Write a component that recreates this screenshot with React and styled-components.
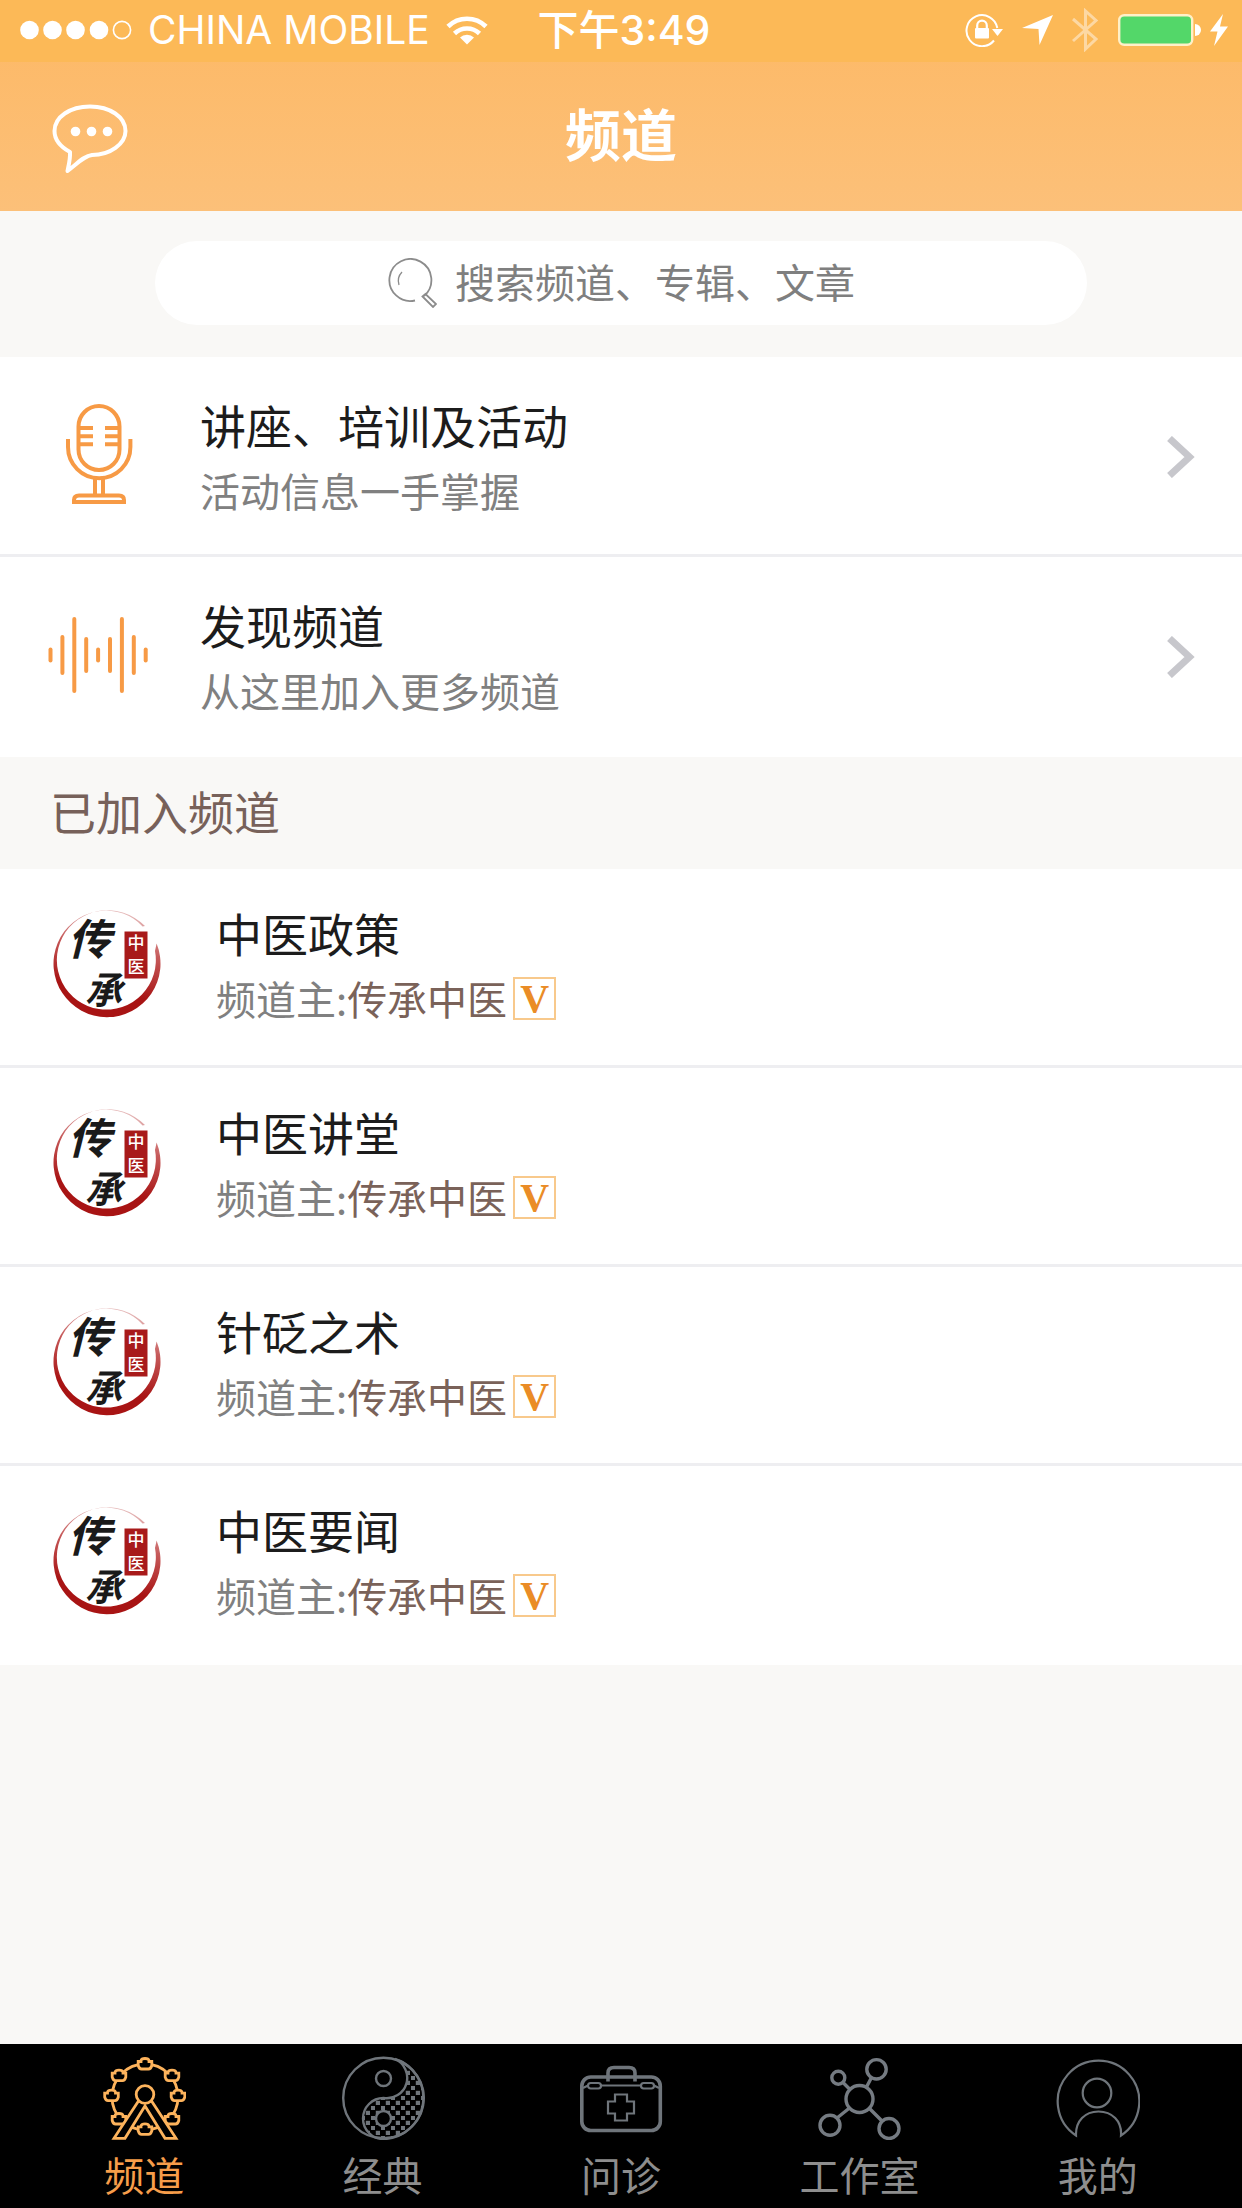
import React from "react";
import styled, { createGlobalStyle } from "styled-components";

const GlobalStyle = createGlobalStyle`
  * {
    box-sizing: border-box;
  }
  body {
    margin: 0;
    background-color: #f9f8f6;
    font-family: "Noto Sans CJK SC", sans-serif;
    font-weight: 400;
  }
`;

const Page = styled.div`
  display: flex;
  flex-direction: column;
  min-height: 100vh;
`;

const Header = styled.header`
  background: linear-gradient(#fdb864, #fcc079);
  color: white;
`;

const StatusBar = styled.div`
  display: flex;
  justify-content: space-between;
  align-items: center;
  height: 62px;
  padding: 0 14px 2px 20px;
  background-color: #fcb957;
  font-family: Inter, "Noto Sans CJK SC", sans-serif;
  font-size: 39px;
  line-height: 60px;
`;

const StatusGroup = styled.div`
  display: flex;
  flex: 1;
  align-items: center;
  justify-content: ${(props) => (props.$end ? "flex-end" : "flex-start")};
  gap: ${(props) => (props.$end ? "19px" : "16px")};
  white-space: nowrap;
`;

const Time = styled.time`
  font-size: 41px;
  font-weight: 500;
`;

const NavBar = styled.div`
  display: grid;
  grid-template-columns: 1fr auto 1fr;
  align-items: center;
  height: 149px;
  padding: 2px 50px 0;
`;

const IconButton = styled.button`
  display: flex;
  justify-self: start;
  padding: 0;
  border: none;
  background: none;
  color: inherit;
  cursor: pointer;
`;

const Title = styled.h1`
  margin: 0;
  padding-bottom: 12px;
  font-size: 56px;
  line-height: 72px;
  font-weight: 700;
`;

const SearchArea = styled.div`
  padding: 30px 12.5% 32px;
`;

const SearchBox = styled.label`
  display: flex;
  align-items: center;
  justify-content: center;
  gap: 18px;
  height: 84px;
  border-radius: 42px;
  background-color: white;
`;

const SearchInput = styled.input`
  width: 400px;
  padding: 0 0 4px;
  border: none;
  outline: none;
  background: none;
  color: #7a7a7a;
  font-family: inherit;
  font-size: 40px;
  line-height: 60px;
  &::placeholder {
    color: #7f7f7f;
    opacity: 1;
  }
`;

const Main = styled.main`
  flex: 1;
`;

const List = styled.ul`
  margin: 0;
  padding: 0;
  list-style: none;
  background-color: white;
`;

const Item = styled.li`
  border-bottom: 3px solid #eeeef1;
  &:last-child {
    border-bottom-color: white;
  }
`;

const RowLink = styled.a`
  display: flex;
  align-items: center;
  gap: 52px;
  height: ${(props) => (props.$channel ? "196px" : "197px")};
  padding: ${(props) => (props.$channel ? "0 47px 4px 50px" : "2px 47px 0 48px")};
  color: inherit;
  text-decoration: none;
`;

const RowText = styled.div`
  flex: 1;
`;

const RowTitle = styled.div`
  color: #1c1c1c;
  font-size: 46px;
  line-height: 66px;
`;

const RowSub = styled.div`
  display: flex;
  align-items: center;
  color: #808080;
  font-size: 40px;
  line-height: 66px;
`;

const Owner = styled.span`
  color: #7a6259;
`;

const Badge = styled.span`
  width: 43px;
  height: 43px;
  margin-left: 6px;
  border: 2px solid #f8c98c;
  color: #ea8c26;
  font-family: "Liberation Serif", serif;
  font-size: 40px;
  font-weight: 700;
  line-height: 39px;
  text-align: center;
`;

const SectionTitle = styled.h2`
  margin: 0;
  padding: 20px 50px 26px;
  color: #77615a;
  font-size: 46px;
  line-height: 66px;
  font-weight: 400;
`;

const TabBar = styled.nav`
  display: grid;
  grid-template-columns: repeat(5, 1fr);
  padding: 12px 25px 10px;
  background-color: black;
`;

const Tab = styled.a`
  display: flex;
  flex-direction: column;
  align-items: center;
  gap: 10px;
  color: ${(props) => (props.$active ? "#f79d4a" : "#8e8e8e")};
  font-size: 40px;
  line-height: 48px;
  text-decoration: none;
`;

const SignalIcon = () => (
  <svg width="112" height="20" viewBox="0 0 112 20" fill="white">
    {[9.5, 32.5, 55.5, 79].map((x) => (
      <circle key={x} cx={x} cy="10" r="9.3" />
    ))}
    <circle cx="102" cy="10" r="8.6" fill="none" stroke="white" strokeWidth="1.6" />
  </svg>
);

const WifiIcon = () => (
  <svg width="42" height="30" viewBox="0 0 42 30" fill="none" stroke="white" strokeWidth="4.6">
    <path d="M2 11.5 A27 27 0 0 1 40 11.5" />
    <path d="M8.5 18.5 A18 18 0 0 1 33.5 18.5" />
    <path d="M21 29.5 L14 22.5 A10 10 0 0 1 28 22.5 Z" fill="white" stroke="none" />
  </svg>
);

const LockIcon = () => (
  <svg width="38" height="34" viewBox="0 0 38 34">
    <path d="M29 27.5 A15.5 15.5 0 1 1 32.3 15" fill="none" stroke="white" strokeWidth="2" />
    <path d="M27 16 H38 L32.5 23 Z" fill="white" />
    <path d="M12.2 16 V12.5 A4.8 4.8 0 0 1 21.8 12.5 V16" fill="none" stroke="white" strokeWidth="2.2" />
    <rect x="10" y="15" width="14" height="10.5" rx="1" fill="white" />
  </svg>
);

const LocationIcon = () => (
  <svg width="31" height="30" viewBox="0 0 31 30" fill="white">
    <path d="M31 0 L17.5 30 L16.5 14 L0 13 Z" />
  </svg>
);

const BluetoothIcon = () => (
  <svg width="27" height="44" viewBox="0 0 27 44" fill="none" stroke="white" strokeWidth="3" opacity="0.45">
    <path d="M1 11 L24 31 L13.5 41 V3 L24 12.5 L1 33" />
  </svg>
);

const BatteryIcon = () => (
  <svg width="110" height="32" viewBox="0 0 110 32">
    <rect x="1.2" y="1.2" width="73" height="29.6" rx="5" fill="#53d769" stroke="#fff0c8" strokeWidth="2.4" />
    <path d="M77 10 A6 6 0 0 1 77 22 Z" fill="white" />
    <path d="M105 0 L92 17.5 H99.5 L96 32 L110 12.5 H102 Z" fill="white" />
  </svg>
);

const ChatIcon = () => (
  <svg width="80" height="72" viewBox="0 0 80 72" fill="none" stroke="white" strokeWidth="4" strokeLinejoin="round">
    <path d="M20 50 C9 44 4.5 37 4.5 29 C4.5 15 20 4.5 40 4.5 C60 4.5 75.5 15 75.5 29 C75.5 42 60 53 42 53 C34 54 28 61 17.5 69 C19 62 20.5 56 20 50 Z" />
    <g fill="white" stroke="none">
      <circle cx="25.5" cy="29.5" r="4.8" />
      <circle cx="41.5" cy="29.5" r="4.8" />
      <circle cx="57.5" cy="29.5" r="4.8" />
    </g>
  </svg>
);

const SearchIcon = () => (
  <svg width="50" height="50" viewBox="0 0 50 50" fill="none" stroke="#8c8c8c" strokeWidth="1.8">
    <path d="M28 42.5 A21 21 0 1 1 37 38" />
    <path d="M12 27 A13 13 0 0 1 15 14" strokeWidth="1.3" />
    <path d="M35.5 38.5 L38.5 36 L49 46 L46 49 Z" />
  </svg>
);

const MicIcon = () => (
  <svg width="100" height="106" viewBox="0 0 100 106" fill="none" stroke="#f79a45" strokeWidth="4">
    <rect x="30.5" y="2" width="41" height="64" rx="20.5" />
    <path d="M31 24 H45 M31 32.3 H45 M31 40.3 H45 M57 24 H71 M57 32.3 H71 M57 40.3 H71" />
    <path d="M20 35 V43 A31.2 31.2 0 0 0 82.4 43 V35" />
    <path d="M47 75 V91 M55 75 V91" />
    <path d="M26 98 V96 Q26 91.5 31 91.5 H71 Q76 91.5 76 96 V98 Z" />
  </svg>
);

// half height of each bar, left to right
const bars = [7.5, 20, 38, 18, 7.5, 18, 38, 20, 7.5];

const WaveIcon = () => (
  <svg width="100" height="104" viewBox="0 0 100 104" stroke="#f79a45" strokeWidth="4" strokeLinecap="round">
    {bars.map((h, i) => (
      <line key={i} x1={2.5 + i * 11.9} x2={2.5 + i * 11.9} y1={52 - h} y2={48 + h} />
    ))}
  </svg>
);

const Chevron = () => (
  <svg width="28" height="42" viewBox="0 0 28 42" fill="none" stroke="#c7c7cc" strokeWidth="7">
    <path d="M2.5 2.5 L22.5 21 L2.5 39.5" />
  </svg>
);

const Avatar = () => (
  <svg width="114" height="118" viewBox="0 0 114 118" fontFamily="'Noto Sans CJK SC', sans-serif">
    <defs>
      <linearGradient id="ring" x1="0.6" y1="0" x2="0.4" y2="1">
        <stop offset="0" stopColor="#e6bcbc" />
        <stop offset="0.35" stopColor="#c65a5a" />
        <stop offset="0.75" stopColor="#a81414" />
      </linearGradient>
    </defs>
    <path
      d="M106.6 37.6 A53.5 53.5 0 1 1 95 20 L92.6 20.4 A49.5 49.5 0 1 0 105 45 Z"
      fill="url(#ring)"
    />
    <g fill="#1a1a1a" fontWeight="700" fontStyle="italic">
      <text x="18" y="49" fontSize="43">传</text>
      <text x="35" y="98" fontSize="37">承</text>
    </g>
    <rect x="74.5" y="25.5" width="23" height="47" fill="#a81a1a" />
    <g fill="white" fontWeight="500" fontSize="17">
      <text x="77.5" y="43">中</text>
      <text x="77.5" y="67">医</text>
    </g>
  </svg>
);

const TabIcon = ({ color, width, children }) => (
  <svg width="84" height="84" viewBox="0 0 84 84" fill="none" stroke={color} strokeWidth={width}>
    {children}
  </svg>
);

const cabins = [
  [43, 8],
  [17, 19.7],
  [70, 19.7],
  [9.5, 39.7],
  [76, 39.7],
  [17, 63],
  [70, 63],
  [43, 73.3],
];

const WheelIcon = () => (
  <TabIcon color="#fdb35c" width="2.8">
    <circle cx="43" cy="41" r="33" />
    {cabins.map(([x, y]) => (
      <path
        key={`${x}-${y}`}
        transform={`translate(${x} ${y})`}
        fill="black"
        d="M-4 -2.5 V-3.5 Q-3.5 -5.5 0 -5.5 Q3.5 -5.5 4 -3.5 V-2.5 H6.8 V1.5 Q5.8 5 3.5 5 H-3.5 Q-5.8 5 -6.8 1.5 V-2.5 Z"
      />
    ))}
    <path d="M36.5 45 L12 82.3 H23 L43 50 L63 82.3 H74 L49.5 45 Z" fill="black" />
    <circle cx="43" cy="38.5" r="8.8" fill="black" />
  </TabIcon>
);

const YinYangIcon = () => (
  <TabIcon color="#6f757b" width="2.4">
    <defs>
      <pattern id="dots" width="10" height="10" patternUnits="userSpaceOnUse">
        <rect x="1" y="1" width="1.8" height="1.8" fill="#6f757b" />
        <rect x="6" y="6" width="1.8" height="1.8" fill="#6f757b" />
      </pattern>
    </defs>
    <path
      d="M54 3 A41 41 0 0 1 42.5 83 A20.5 20.5 0 0 1 42.5 42 A20.5 20.5 0 0 0 54 3 Z"
      fill="url(#dots)"
    />
    <circle cx="42.5" cy="42" r="40.3" />
    <circle cx="42.5" cy="22.5" r="7.5" />
    <circle cx="42.5" cy="62.5" r="7.5" fill="black" />
  </TabIcon>
);

const KitIcon = () => (
  <TabIcon color="#6f757b" width="3.6">
    <rect x="2.8" y="21" width="78.5" height="53.5" rx="9" />
    <path d="M29 25.5 V17 Q29 11.5 35 11.5 H50 Q56 11.5 56 17 V25.5" />
    <g strokeWidth="2.2">
      <path d="M4 32 L9 29.5 M22 29.5 H62 M75 29.5 L80 32" />
      <rect x="9" y="27" width="13" height="5.5" rx="2.7" />
      <rect x="62" y="27" width="13" height="5.5" rx="2.7" />
      <path d="M36 38.5 H48 V45.5 H55 V57.5 H48 V64.5 H36 V57.5 H29 V45.5 H36 Z" />
    </g>
  </TabIcon>
);

const NetworkIcon = () => (
  <TabIcon color="#757b82" width="3.4">
    <circle cx="42.5" cy="43" r="13.5" />
    <circle cx="59.5" cy="13.3" r="9.7" />
    <circle cx="21.3" cy="21.7" r="6.5" />
    <circle cx="13" cy="69.3" r="10" />
    <circle cx="72" cy="72.5" r="10" />
    <path d="M26 26.5 L33 33.5 M54.5 21.5 L49.5 31 M20 62 L32.5 52 M52.5 52.5 L65 65" />
  </TabIcon>
);

const UserIcon = () => (
  <TabIcon color="#6f757b" width="2.2">
    <path d="M20 79.5 A40.8 40.8 0 1 1 65 79.5 C66 65 56 55.5 42.5 55.5 C29 55.5 19.5 65 20 79.5 Z" />
    <circle cx="41" cy="37" r="14.3" />
  </TabIcon>
);

const entries = [
  { title: "讲座、培训及活动", sub: "活动信息一手掌握", Icon: MicIcon },
  { title: "发现频道", sub: "从这里加入更多频道", Icon: WaveIcon },
];

const channels = ["中医政策", "中医讲堂", "针砭之术", "中医要闻"];

const tabs = [
  { label: "频道", Icon: WheelIcon, active: true },
  { label: "经典", Icon: YinYangIcon },
  { label: "问诊", Icon: KitIcon },
  { label: "工作室", Icon: NetworkIcon },
  { label: "我的", Icon: UserIcon },
];

export default function App() {
  return (
    <Page>
      <GlobalStyle />
      <Header>
        <StatusBar>
          <StatusGroup>
            <SignalIcon />
            <span>CHINA MOBILE</span>
            <WifiIcon />
          </StatusGroup>
          <Time>下午3:49</Time>
          <StatusGroup $end>
            <LockIcon />
            <LocationIcon />
            <BluetoothIcon />
            <BatteryIcon />
          </StatusGroup>
        </StatusBar>
        <NavBar>
          <IconButton type="button" aria-label="消息">
            <ChatIcon />
          </IconButton>
          <Title>频道</Title>
        </NavBar>
      </Header>
      <Main>
        <SearchArea>
          <SearchBox htmlFor="search">
            <SearchIcon />
            <SearchInput
              id="search"
              type="text"
              aria-label="搜索"
              placeholder="搜索频道、专辑、文章"
            />
          </SearchBox>
        </SearchArea>
        <List>
          {entries.map(({ title, sub, Icon }) => (
            <Item key={title}>
              <RowLink href="#">
                <Icon />
                <RowText>
                  <RowTitle>{title}</RowTitle>
                  <RowSub>{sub}</RowSub>
                </RowText>
                <Chevron />
              </RowLink>
            </Item>
          ))}
        </List>
        <SectionTitle>已加入频道</SectionTitle>
        <List>
          {channels.map((name) => (
            <Item key={name}>
              <RowLink href="#" $channel>
                <Avatar />
                <RowText>
                  <RowTitle>{name}</RowTitle>
                  <RowSub>
                    频道主:<Owner>传承中医</Owner>
                    <Badge>V</Badge>
                  </RowSub>
                </RowText>
              </RowLink>
            </Item>
          ))}
        </List>
      </Main>
      <TabBar>
        {tabs.map(({ label, Icon, active }) => (
          <Tab key={label} href="#" $active={active}>
            <Icon />
            <span>{label}</span>
          </Tab>
        ))}
      </TabBar>
    </Page>
  );
}
